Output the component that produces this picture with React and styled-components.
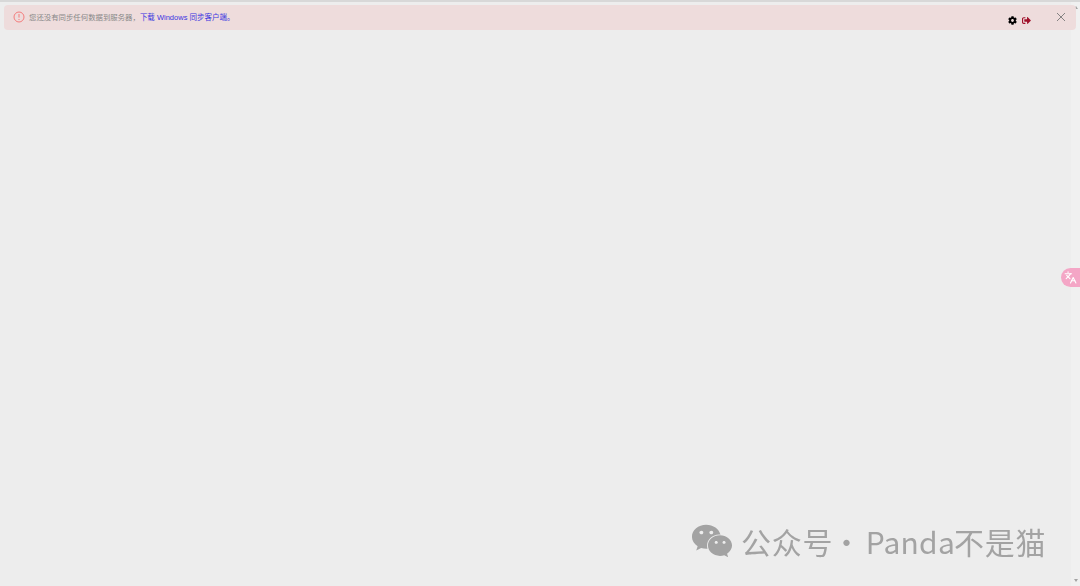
import React from "react";
import styled, { createGlobalStyle } from "styled-components";
import { FaCog, FaSignOutAlt, FaWeixin } from "react-icons/fa";
import { LuLanguages } from "react-icons/lu";

const Global = createGlobalStyle`
  html, body { margin: 0; padding: 0; height: 100%; background: #ededed; overflow: hidden; }
  #root { height: 100%; }
`;

const Page = styled.div`
  position: relative;
  width: 1080px;
  height: 586px;
  box-sizing: border-box;
  background: #ededed;
  border-top: 2px solid #d8d8d8;
  padding: 3px 4px 0;
  font-family: "Liberation Sans", "Noto Sans CJK SC", sans-serif;
  overflow: hidden;
`;

const Scrollbar = styled.div`
  position: absolute;
  top: 0;
  right: 0;
  bottom: 0;
  width: 9px;
  background: #f0f0f0;
  display: flex;
  flex-direction: column;
  justify-content: space-between;
  align-items: center;
  padding: 4px 0;
  box-sizing: border-box;
`;

const Arrow = styled.div`
  width: 0;
  height: 0;
  border-left: 2.5px solid transparent;
  border-right: 2.5px solid transparent;
  ${(p) => (p.$up ? "border-bottom: 3px solid #a3a3a3;" : "border-top: 3px solid #a3a3a3;")}
`;

const Alert = styled.div`
  position: relative;
  height: 25px;
  box-sizing: border-box;
  background: #eedcdc;
  border-radius: 4px;
  display: flex;
  align-items: center;
  padding: 0 9px 1px;
  font-size: 7.4px;
  color: #888;
`;

const AlertIcon = styled.svg`
  width: 12px;
  height: 12px;
  margin-right: 4px;
  flex: none;
`;

const Message = styled.span`
  padding-bottom: 2px;
`;

const Link = styled.span`
  color: #3a34e0;
  font-size: 7.5px;
`;

const Actions = styled.div`
  margin-left: auto;
  display: flex;
  align-items: center;
  gap: 5px;
  padding-top: 7px;
  margin-right: 36px;
`;

const Close = styled.svg`
  position: absolute;
  right: 10px;
  top: 7px;
  width: 10px;
  height: 10px;
`;

const Translate = styled.div`
  position: absolute;
  right: 0;
  top: 266px;
  width: 19px;
  height: 19px;
  border-radius: 9.5px 0 0 9.5px;
  background: #f4a6c6;
  color: #fff;
  display: flex;
  align-items: center;
  justify-content: center;
`;

const Watermark = styled.div`
  position: absolute;
  left: 691px;
  top: 518px;
  display: flex;
  align-items: center;
  gap: 8px;
  color: #a3a3a3;
  font-family: "Noto Sans CJK SC", "Noto Sans", sans-serif;
  font-size: 30px;
  line-height: 40px;
  white-space: nowrap;
  will-change: transform;
`;

const Handle = styled.span`
  letter-spacing: 0.8px;
`;

const Dot = styled.span`
  display: inline-block;
  margin: 0 -4px 0 -2px;
`;

const Latin = styled.span`
  letter-spacing: 0.2px;
  margin-right: -1px;
`;

export default function App() {
  return (
    <>
      <Global />
      <Page>
        <Scrollbar>
          <Arrow $up />
          <Arrow />
        </Scrollbar>
        <Alert>
          <AlertIcon viewBox="0 0 12 12" fill="none">
            <circle cx="6" cy="6" r="5" stroke="#f47c7c" strokeWidth="1" />
            <path d="M6 3v3.6M6 8v1" stroke="#f47c7c" strokeWidth="1" />
          </AlertIcon>
          <Message>
            您还没有同步任何数据到服务器，<Link>下载 Windows 同步客户端。</Link>
          </Message>
          <Actions>
            <FaCog size={9} color="#000" />
            <FaSignOutAlt size={9} color="#a0102a" />
          </Actions>
          <Close viewBox="0 0 10 10">
            <path d="M1 1l8 8M9 1l-8 8" stroke="#777" strokeWidth="0.9" fill="none" />
          </Close>
        </Alert>
        <Translate>
          <LuLanguages size={13} />
        </Translate>
        <Watermark>
          <FaWeixin size={42} />
          <Handle>
            公众号<Dot>·</Dot> <Latin>Panda</Latin>不是猫
          </Handle>
        </Watermark>
      </Page>
    </>
  );
}
